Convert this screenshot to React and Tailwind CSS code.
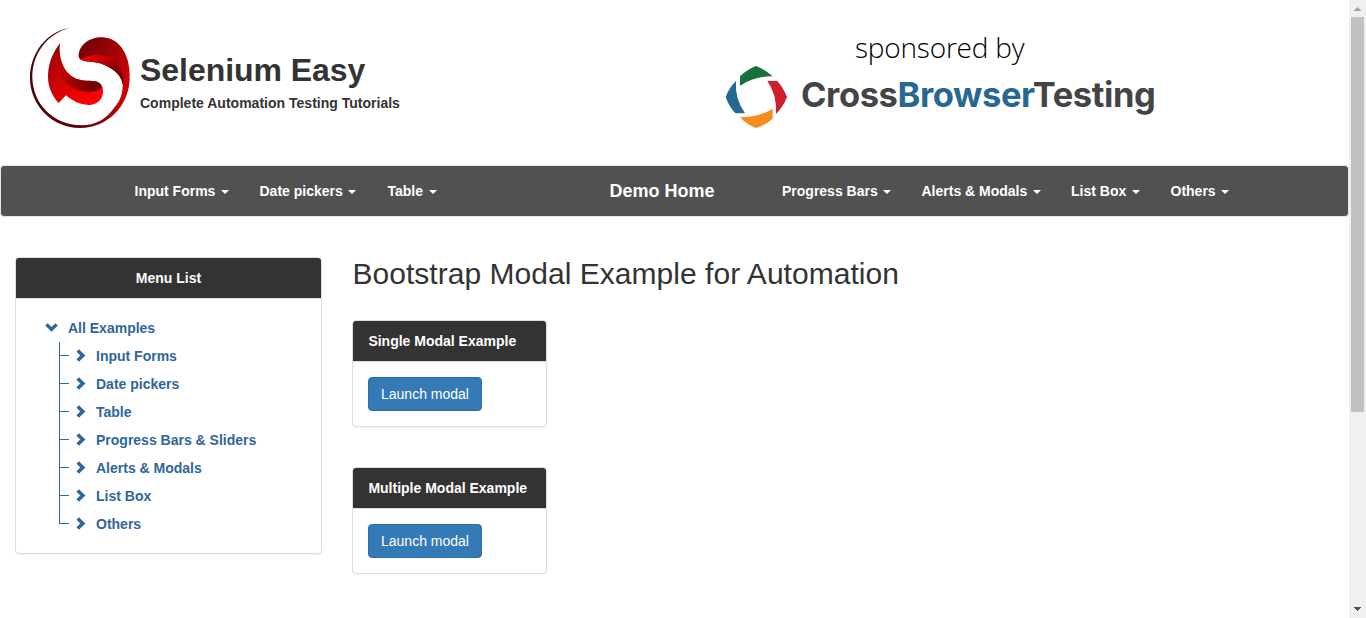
function SeleniumLogo() {
  return (
    <svg width="120" height="116" viewBox="0 0 360 348" className="block shrink-0">
      <defs>
        <linearGradient id="ring" x1="0" y1="0" x2="1" y2="0">
          <stop offset="0" stopColor="#4a0206" />
          <stop offset="0.5" stopColor="#5a0206" />
          <stop offset="0.8" stopColor="#9c0408" />
          <stop offset="1" stopColor="#cc0408" />
        </linearGradient>
        <linearGradient id="top" x1="0.1" y1="0" x2="0.9" y2="0.6">
          <stop offset="0" stopColor="#740206" />
          <stop offset="0.45" stopColor="#940306" />
          <stop offset="1" stopColor="#cc0206" />
        </linearGradient>
        <linearGradient id="band" x1="0" y1="0" x2="1" y2="0.6">
          <stop offset="0" stopColor="#ee0000" />
          <stop offset="0.4" stopColor="#cc0000" />
          <stop offset="0.85" stopColor="#7c0204" />
          <stop offset="1" stopColor="#7c0204" />
        </linearGradient>
        <linearGradient id="leaf" x1="0" y1="0" x2="0.9" y2="0.9">
          <stop offset="0" stopColor="#7c0204" />
          <stop offset="0.4" stopColor="#c40406" />
          <stop offset="0.75" stopColor="#f00000" />
          <stop offset="1" stopColor="#f80404" />
        </linearGradient>
        <linearGradient id="fold" x1="0" y1="0" x2="1" y2="0.5">
          <stop offset="0" stopColor="#d80000" />
          <stop offset="0.45" stopColor="#b40204" />
          <stop offset="1" stopColor="#6c0204" />
        </linearGradient>
      </defs>
      <path d="M146 25 C82 35 30 98 30 174 C30 256 97 324 180 324 C262 324 328 258 329 174 L309 196 C308 222 300 246 282 264 C258 298 226 316 184 316 C100 316 38 252 37 172 C36 102 82 42 146 25Z" fill="url(#ring)" />
      <path d="M176 107 C177 76 207 52 245 52 C294 52 329 98 329 166 C328 210 310 244 280 266 C302 245 311 216 308 192 C302 160 276 144 240 130 C208 122 176 128 176 107Z" fill="url(#top)" />
      <path d="M181 118 C198 107 228 100 256 107 C288 115 306 146 312 176 L308 194 C302 160 276 144 240 130 C214 123 192 126 181 118Z" fill="url(#band)" />
      <path d="M120 69 C116 100 122 138 150 165 C176 187 204 180 226 184 C242 187 250 198 249 216 C248 240 232 254 206 255 C178 254 154 240 138 226 L116 249 C96 228 83 199 84 165 C86 122 102 94 120 69Z" fill="url(#leaf)" />
      <path d="M104 104 C112 134 122 146 150 165 C176 187 204 180 226 184 C240 188 247 198 244 204 C232 216 200 218 174 210 C132 196 104 156 104 104Z" fill="url(#fold)" />
    </svg>
  );
}

function CrossBrowserMark() {
  return (
    <svg width="75" height="75" viewBox="0 0 225 225" className="block shrink-0">
      <path d="M108 18 Q138 30 158 49 Q105 48 60 77 V49 Q80 29 108 18Z" fill="#18713a" />
      <path d="M142 63 H172 Q190 83 201 111 Q190 140 168 162 Q172 106 142 63Z" fill="#cd202c" />
      <path d="M158 146 V176 Q138 195 108 204 Q80 194 60 171 Q112 174 158 146Z" fill="#f68b1f" />
      <path d="M48 63 Q44 116 75 160 H46 Q28 141 17 111 Q28 81 48 63Z" fill="#276893" />
    </svg>
  );
}

function NavItem({ label, className }) {
  return (
    <a className={`flex shrink-0 items-center whitespace-nowrap text-[14px] leading-5 font-bold ${className}`}>
      {label}
      <span className="ml-[5.6px] mt-[2px] border-x-4 border-t-4 border-x-transparent border-t-white" />
    </a>
  );
}

function Chevron({ down }) {
  return (
    <svg width="13" height="13" viewBox="0 0 13 13" className="block shrink-0">
      {down ? (
        <path d="M0.2 4.6 L2.6 2.2 L6.5 5.9 L10.4 2.2 L12.8 4.6 L6.5 10.7Z" fill="#2f669b" />
      ) : (
        <path d="M1.4 2.8 L3.9 0.3 L10.4 6.5 L3.9 12.7 L1.4 10.2 L5.3 6.5Z" fill="#2f669b" />
      )}
    </svg>
  );
}

const branches = ["Input Forms", "Date pickers", "Table", "Progress Bars & Sliders", "Alerts & Modals", "List Box", "Others"];

function TreeBranch({ label, last }) {
  return (
    <li className="flex h-7">
      <div className="flex w-[10px] shrink-0 flex-col">
        <div className="h-[14px] border-b border-l border-[#2f669b]" />
        <div className={last ? "grow" : "grow border-l border-[#2f669b]"} />
      </div>
      <div className="flex h-[27px] items-center pl-[6px]">
        <Chevron />
        <span className="ml-[8px] pt-[1px] leading-5">{label}</span>
      </div>
    </li>
  );
}

function ModalPanel({ title, className }) {
  return (
    <section className={`w-[195px] rounded-[4px] border border-[#ddd] bg-white shadow-[0_1px_1px_rgba(0,0,0,0.05)] ${className}`}>
      <div className="h-[41px] rounded-t-[3px] border-b border-[#ddd] bg-[#333] px-[15.4px] py-[10px] text-[14px] leading-5 font-bold whitespace-nowrap text-white">
        {title}
      </div>
      <div className="p-[15px]">
        <button className="block h-[34px] w-[114px] rounded-[4px] border border-[#2e6da4] bg-[#337ab7] text-[14px] leading-5 text-white">
          Launch modal
        </button>
      </div>
    </section>
  );
}

export default function App() {
  return (
    <div className="flex h-[618px] w-[1366px] overflow-hidden bg-white font-['Liberation_Sans',Arial,sans-serif] text-[#333]">
      <div className="w-[1349px] shrink-0">
        <header className="flex h-[165px]">
          <div className="flex w-[710px] pt-5 pl-5">
            <SeleniumLogo />
            <div className="pt-[32px]">
              <div className="text-[32px] leading-9 font-bold tracking-[-0.05px] whitespace-nowrap">Selenium Easy</div>
              <div className="mt-[5px] text-[14px] leading-5 font-bold tracking-[0.01px] whitespace-nowrap">Complete Automation Testing Tutorials</div>
            </div>
          </div>
          <div className="w-[460px] pt-[27px]">
            <div className="h-[33px] pl-[145px] font-['Open_Sans',sans-serif] text-[28px] leading-[41px] font-light tracking-[-0.2px] whitespace-nowrap text-black">sponsored by</div>
            <div className="flex pl-[10px]">
              <CrossBrowserMark />
              <div className="pt-[14px] pl-[6px] font-['Inter',sans-serif] text-[34.5px] leading-[42px] font-bold tracking-[-0.4px] whitespace-nowrap text-[#444446]">
                Cross<span className="text-[#276893]">Browser</span>Testing
              </div>
            </div>
          </div>
        </header>

        <nav className="flex h-[52px] items-center rounded-[4px] border border-[#e7e7e7] bg-[#515151] pl-[133.5px] text-white">
          <NavItem label="Input Forms" className="w-[125px]" />
          <NavItem label="Date pickers" className="w-[128px]" />
          <NavItem label="Table" className="w-[222px]" />
          <a className="w-[172.5px] shrink-0 text-[18px] leading-5 font-bold whitespace-nowrap">Demo Home</a>
          <NavItem label="Progress Bars" className="w-[139.5px]" />
          <NavItem label="Alerts & Modals" className="w-[149.5px]" />
          <NavItem label="List Box" className="w-[99.5px]" />
          <NavItem label="Others" className="w-[90px]" />
        </nav>

        <div className="flex items-start pt-10 pl-[15px]">
          <aside className="h-[297px] w-[307px] shrink-0 rounded-[4px] border border-[#ddd] shadow-[0_1px_1px_rgba(0,0,0,0.05)]">
            <div className="h-[41px] rounded-t-[3px] border-b border-[#ddd] bg-[#333] py-[10px] text-center text-[14px] leading-5 font-bold text-white">
              Menu List
            </div>
            <div className="pt-[15px] pl-[29px] text-[14px] font-bold whitespace-nowrap text-[#2f669b]">
              <div className="flex h-[28px] items-center pb-[1px]">
                <Chevron down />
                <span className="ml-[10px] pt-[1px] leading-5">All Examples</span>
              </div>
              <ul className="ml-[14px]">
                {branches.map((label, i) => (
                  <TreeBranch key={label} label={label} last={i === branches.length - 1} />
                ))}
              </ul>
            </div>
          </aside>
          <main className="ml-[30px]">
            <h2 className="pl-[0.5px] text-[30px] leading-[33px] tracking-[0.03px] whitespace-nowrap">Bootstrap Modal Example for Automation</h2>
            <ModalPanel title="Single Modal Example" className="mt-[30px]" />
            <ModalPanel title="Multiple Modal Example" className="mt-10" />
          </main>
        </div>
      </div>

      <div className="flex w-[17px] shrink-0 flex-col items-center bg-[#f0f0f0]">
        <svg width="17" height="17" viewBox="0 0 17 17" className="block shrink-0" shapeRendering="crispEdges">
          <path d="M5 11 H12 V10 H11 V9 H10 V8 H9 V7 H8 V8 H7 V9 H6 V10 H5Z" fill="#a3a3a3" />
        </svg>
        <div className="h-[395px] w-[13px] bg-[#c1c1c1]" />
        <div className="grow" />
        <svg width="17" height="17" viewBox="0 0 17 17" className="block shrink-0" shapeRendering="crispEdges">
          <path d="M5 6 H12 V7 H11 V8 H10 V9 H9 V10 H8 V9 H7 V8 H6 V7 H5Z" fill="#505050" />
        </svg>
      </div>
    </div>
  );
}
